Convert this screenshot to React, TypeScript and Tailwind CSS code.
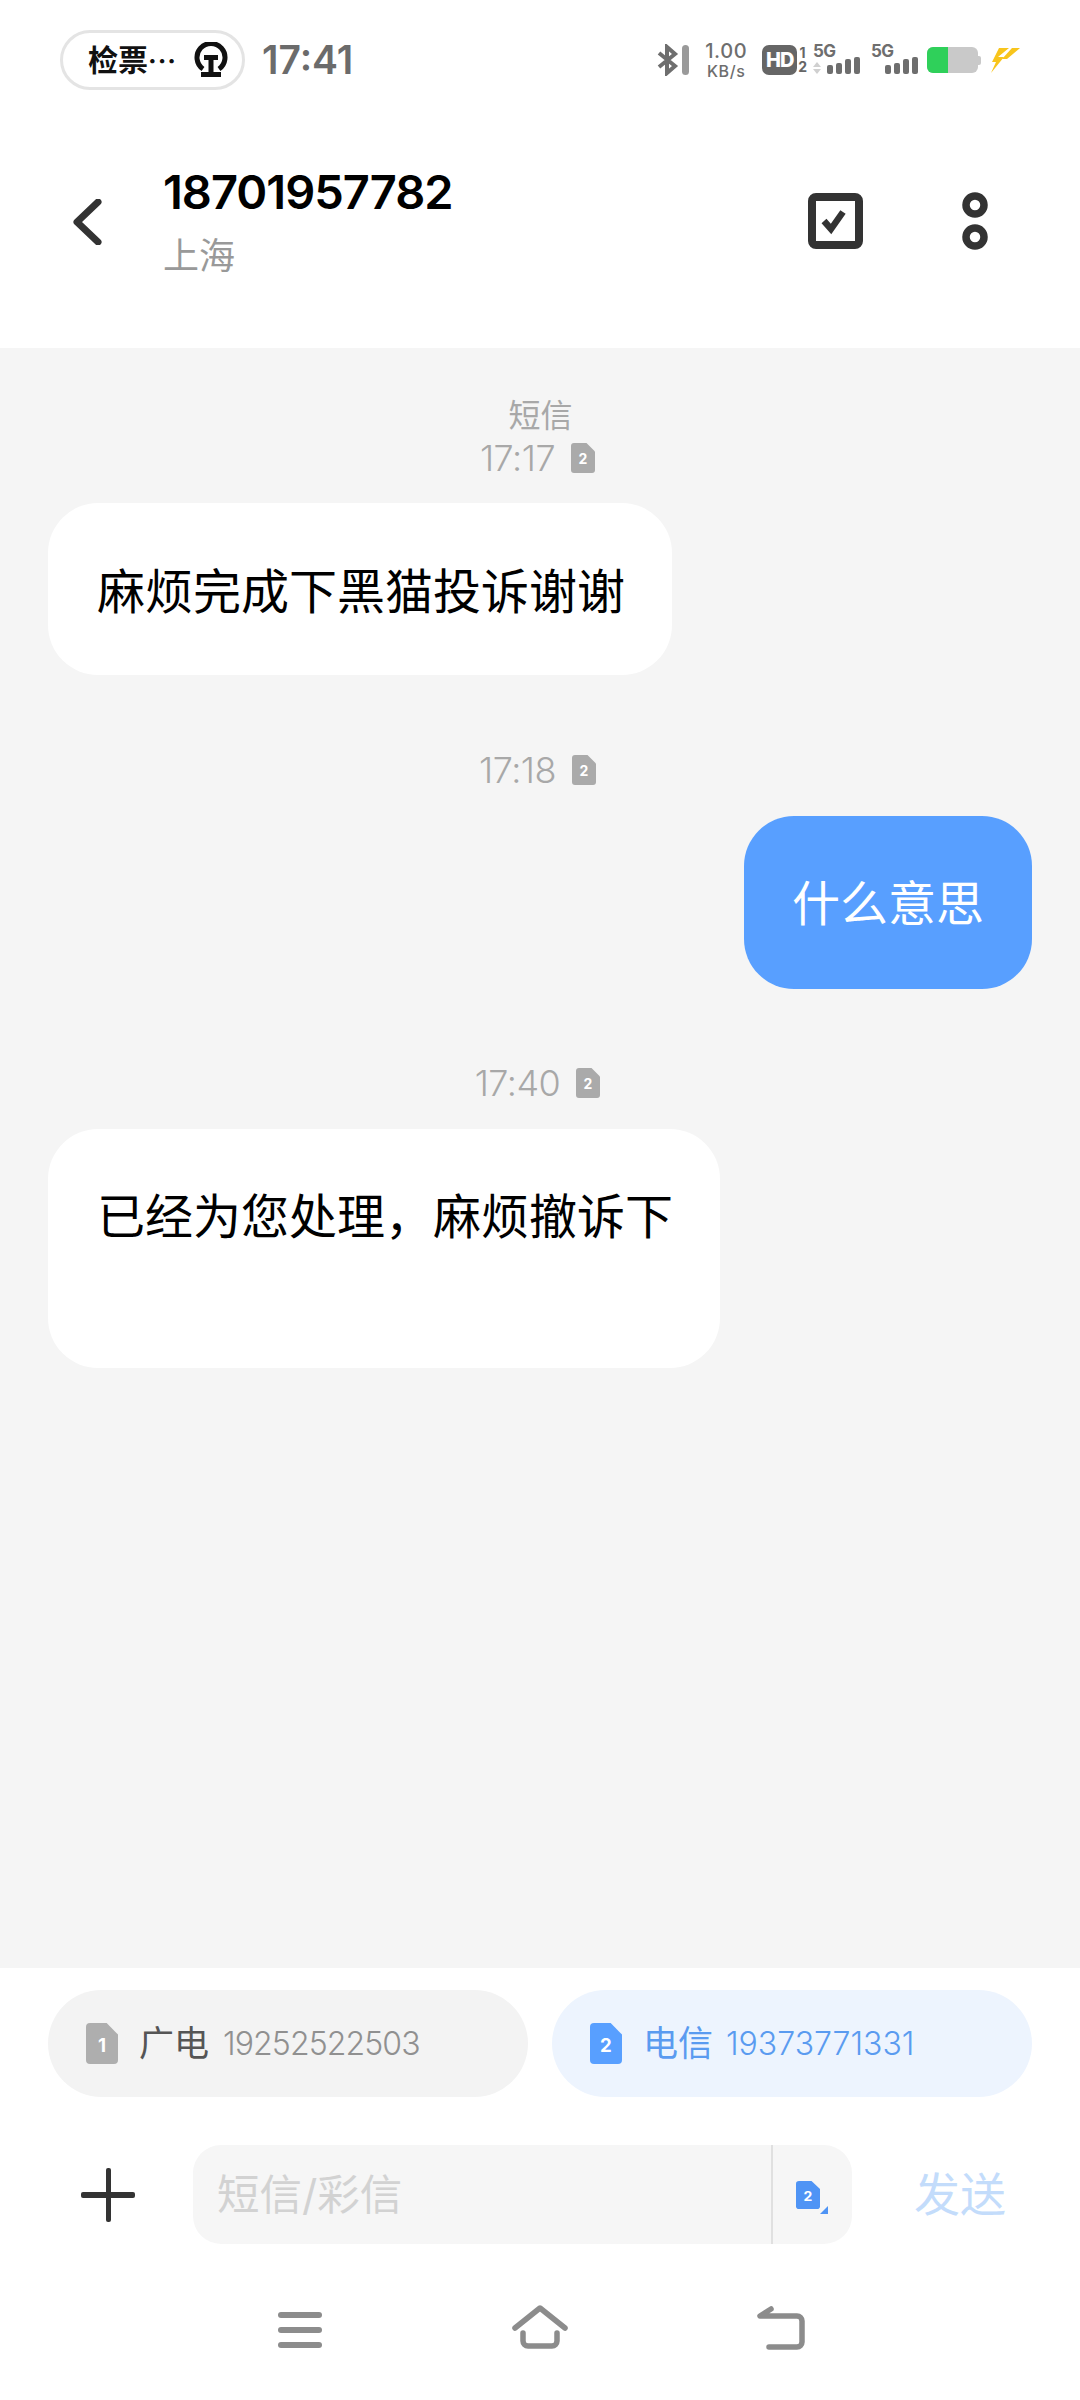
import { ReactNode } from 'react'

const SimIcon = ({ n, color, w = 24, h = 30 }: { n: string; color: string; w?: number; h?: number }) => (
  <svg width={w} height={h} viewBox="0 0 24 30" preserveAspectRatio="none" className="shrink-0">
    <path d="M3 0h12.5L24 8.5V27a3 3 0 0 1-3 3H3a3 3 0 0 1-3-3V3a3 3 0 0 1 3-3z" fill={color} />
    <text x="12" y="21" textAnchor="middle" fontSize="14" fontWeight="700" fill="#fff" fontFamily="Inter, sans-serif">
      {n}
    </text>
  </svg>
)

const Signal = () => (
  <div className="flex items-end gap-[3px] h-[17px]">
    {[9, 11, 15, 17].map((b, i) => (
      <div key={i} className="w-[6px] rounded-[2px] bg-[#6e6e6e]" style={{ height: b }} />
    ))}
  </div>
)

const StatusRight = () => (
  <div className="flex items-center">
    <svg width="34" height="32" viewBox="0 0 34 32" fill="none" className="ml-[1px]">
      <path d="M2 9l16 13-8 7V3l8 7L2 23" stroke="#6e6e6e" strokeWidth="4" />
      <rect x="25" y="1" width="7" height="30" rx="3.5" fill="#9a9a9a" />
    </svg>
    <div className="ml-[11px] w-[48px] flex flex-col items-center text-[#6e6e6e] font-medium leading-none">
      <span className="text-[20px] tracking-[0.6px]">1.00</span>
      <span className="text-[16px] mt-[2px] tracking-[0.6px]">KB/s</span>
    </div>
    <div className="ml-[12px] w-[35px] h-[30px] rounded-[7px] bg-[#666] text-white text-[20px] font-extrabold tracking-[-1px] flex items-center justify-center">
      HD
    </div>
    <div className="ml-[1px] flex flex-col items-center text-[#666] text-[14px] font-bold leading-[14px]">
      <span>1</span>
      <span>2</span>
    </div>
    <div className="relative ml-[6px] w-[46px] h-[30px] flex flex-col">
      <span className="text-[17px] leading-[12px] font-bold text-[#6e6e6e] tracking-[-0.5px]">5G</span>
      <div className="self-end -mr-[1px]">
        <Signal />
      </div>
      <div className="absolute left-0 bottom-[1px] flex flex-col gap-[2px]">
        <div className="w-0 h-0 border-x-[4px] border-b-[5px] border-x-transparent border-b-[#d0d0d0]" />
        <div className="w-0 h-0 border-x-[4px] border-t-[5px] border-x-transparent border-t-[#d0d0d0]" />
      </div>
    </div>
    <div className="ml-[12px] w-[46px] h-[30px] flex flex-col">
      <span className="text-[17px] leading-[12px] font-bold text-[#6e6e6e] tracking-[-0.5px]">5G</span>
      <div className="self-end -mr-[1px]">
        <Signal />
      </div>
    </div>
    <div className="ml-[10px] flex items-center">
      <div className="w-[51px] h-[26px] rounded-[6px] bg-[#c9c9c9] overflow-hidden">
        <div className="w-[21px] h-full bg-[#2fd05a]" />
      </div>
      <div className="w-[3px] h-[9px] rounded-r-[2px] bg-[#c9c9c9]" />
    </div>
    <svg width="30" height="25" viewBox="0 0 30 25" className="ml-[9px]">
      <path d="M9 0h10L8 9l6 0L1 25l5-11H2z" fill="#f8c51c" />
      <path d="M22 0h8L17 11h-5z" fill="#f8c51c" />
    </svg>
  </div>
)

const TimeRow = ({ time, className }: { time: string; className?: string }) => (
  <div className={`flex items-center justify-center h-[36px] pr-[5px] text-[36px] text-[#a8a8a8] font-light ${className ?? ''}`}>
    <span className="tracking-[-0.5px]">{time}</span>
    <div className="ml-[16px]">
      <SimIcon n="2" color="#aaaaaa" />
    </div>
  </div>
)

const Bubble = ({ children, className }: { children: ReactNode; className: string }) => (
  <div className={`rounded-[50px] text-[48px] leading-[60px] ${className}`}>{children}</div>
)

export default function App() {
  return (
    <div className="w-[1080px] h-[2400px] flex flex-col bg-white font-['Inter','Noto_Sans_CJK_SC',sans-serif]">
      {/* status bar */}
      <div className="h-[90px] pt-[30px] pl-[60px] pr-[60px] flex items-center justify-between shrink-0">
        <div className="flex items-center">
          <div className="w-[185px] h-[60px] rounded-full border-[3px] border-[#e4e4e4] flex items-center pl-[25px] font-bold text-[30px] text-[#111]">
            <span>检票</span>
            <span className="text-[26px] tracking-[1px]">···</span>
            <svg width="34" height="36" viewBox="0 0 34 36" fill="none" className="ml-[17px]">
              <path d="M9 27A14 14 0 1 1 25 27" stroke="#111" strokeWidth="5" />
              <path d="M10 13h14v5h-4.500v12H27v5H7v-5h7.500V18H10z" fill="#111" />
            </svg>
          </div>
          <span className="ml-[17px] text-[39px] font-semibold text-[#6b6b6b]">17:41</span>
        </div>
        <StatusRight />
      </div>

      {/* header */}
      <div className="h-[258px] flex shrink-0 pl-[72px] pr-[92px] pt-[76px]">
        <svg width="30" height="46" viewBox="0 0 30 46" fill="none" className="mt-[33px]">
          <path d="M26 3L5 23l21 20" stroke="#333" strokeWidth="7" strokeLinecap="round" strokeLinejoin="round" />
        </svg>
        <div className="ml-[61px] flex-1">
          <div className="text-[47px] leading-[50px] font-semibold text-black tracking-[-1px] mt-[1px]">18701957782</div>
          <div className="text-[36px] leading-[44px] text-[#999] mt-[17px]">上海</div>
        </div>
        <svg width="56" height="56" viewBox="0 0 56 56" fill="none" className="mt-[27px]">
          <rect x="4" y="4" width="47" height="48" rx="4" stroke="#333" strokeWidth="8" />
          <path d="M16 28l7 8 12-17" stroke="#333" strokeWidth="6.5" />
        </svg>
        <svg width="26" height="58" viewBox="0 0 26 58" fill="none" className="ml-[98px] mt-[26px]">
          <circle cx="13" cy="13" r="9" stroke="#333" strokeWidth="7.5" />
          <circle cx="13" cy="45" r="9" stroke="#333" strokeWidth="7.5" />
        </svg>
      </div>

      {/* messages */}
      <div className="flex-1 bg-[#f5f5f5] px-[48px] pt-[48px] flex flex-col">
        <div className="text-center text-[32px] leading-[40px] text-[#a8a8a8] pl-[1px]">短信</div>
        <TimeRow time="17:17" className="mt-[4px]" />
        <Bubble className="mt-[27px] self-start w-[624px] h-[172px] bg-white text-black pt-[59px] pl-[49px] whitespace-nowrap">
          麻烦完成下黑猫投诉谢谢
        </Bubble>

        <TimeRow time="17:18" className="mt-[77px]" />
        <Bubble className="mt-[28px] self-end w-[288px] h-[173px] bg-[#589fff] text-white pt-[58px] pl-[48px] whitespace-nowrap">
          什么意思
        </Bubble>

        <TimeRow time="17:40" className="mt-[76px]" />
        <Bubble className="mt-[28px] self-start w-[672px] h-[239px] bg-white text-black pt-[58px] pl-[49px] whitespace-nowrap">
          已经为您处理，麻烦撤诉下
        </Bubble>
      </div>

      {/* sim selector */}
      <div className="shrink-0 px-[48px] pt-[22px] flex gap-[24px]">
        <div className="w-[480px] h-[107px] rounded-[54px] bg-[#f3f3f3] flex items-center pl-[38px]">
          <SimIcon n="1" color="#aeaeae" w={32} h={41} />
          <span className="ml-[21px] text-[35px] text-[#555]">广电</span>
          <span className="ml-[14px] text-[32px] font-light text-[#909090] tracking-[-0.9px]">19252522503</span>
        </div>
        <div className="w-[480px] h-[107px] rounded-[54px] bg-[#edf4fe] flex items-center pl-[38px]">
          <SimIcon n="2" color="#589fff" w={32} h={41} />
          <span className="ml-[21px] text-[35px] text-[#5a9bf0]">电信</span>
          <span className="ml-[13px] text-[32px] font-light text-[#5a9bf0]">19373771331</span>
        </div>
      </div>

      {/* input row */}
      <div className="shrink-0 mt-[48px] h-[99px] flex items-center pl-[81px]">
        <svg width="54" height="54" viewBox="0 0 54 54">
          <rect x="25" y="0" width="5" height="54" rx="2" fill="#333" />
          <rect x="0" y="24" width="54" height="6" rx="2" fill="#333" />
        </svg>
        <div className="ml-[58px] w-[659px] h-[99px] rounded-[28px] bg-[#f6f6f6] flex items-center">
          <div className="w-[580px] h-full border-r-[2px] border-[#e0e0e0] pl-[24px] flex items-center text-[42.500px] text-[#d2d2d2]">
            短信/彩信
          </div>
          <div className="relative ml-[23px]">
            <SimIcon n="2" color="#4f94f5" w={24} h={28} />
            <div className="absolute -right-[8px] -bottom-[5px] w-0 h-0 border-l-[8px] border-b-[8px] border-l-transparent border-b-[#4f94f5]" />
          </div>
        </div>
        <span className="ml-[62px] text-[46px] text-[#c3dcfb]">发送</span>
      </div>

      {/* nav bar */}
      <div className="shrink-0 h-[156px] pl-[278px] pt-[68px] flex items-start">
        <svg width="44" height="36" viewBox="0 0 44 36">
          <rect x="0" y="0" width="44" height="6" rx="3" fill="#8c8c8c" />
          <rect x="0" y="15" width="44" height="6" rx="3" fill="#8c8c8c" />
          <rect x="0" y="30" width="44" height="6" rx="3" fill="#8c8c8c" />
        </svg>
        <svg width="56" height="44" viewBox="0 0 56 44" fill="none" className="ml-[190px] -mt-[7px]" stroke="#8c8c8c" strokeWidth="5.5" strokeLinecap="round" strokeLinejoin="round">
          <path d="M3 23L28 3l25 20" />
          <path d="M11 28v8a5 5 0 0 0 5 5h24a5 5 0 0 0 5-5v-8" />
        </svg>
        <svg width="48" height="44" viewBox="0 0 48 44" fill="none" className="ml-[189px] -mt-[6px]" stroke="#8c8c8c" strokeWidth="5.5" strokeLinecap="round" strokeLinejoin="round">
          <path d="M14 3L3 10h37a5 5 0 0 1 5 5v21a5 5 0 0 1-5 5H12" />
        </svg>
      </div>
    </div>
  )
}
